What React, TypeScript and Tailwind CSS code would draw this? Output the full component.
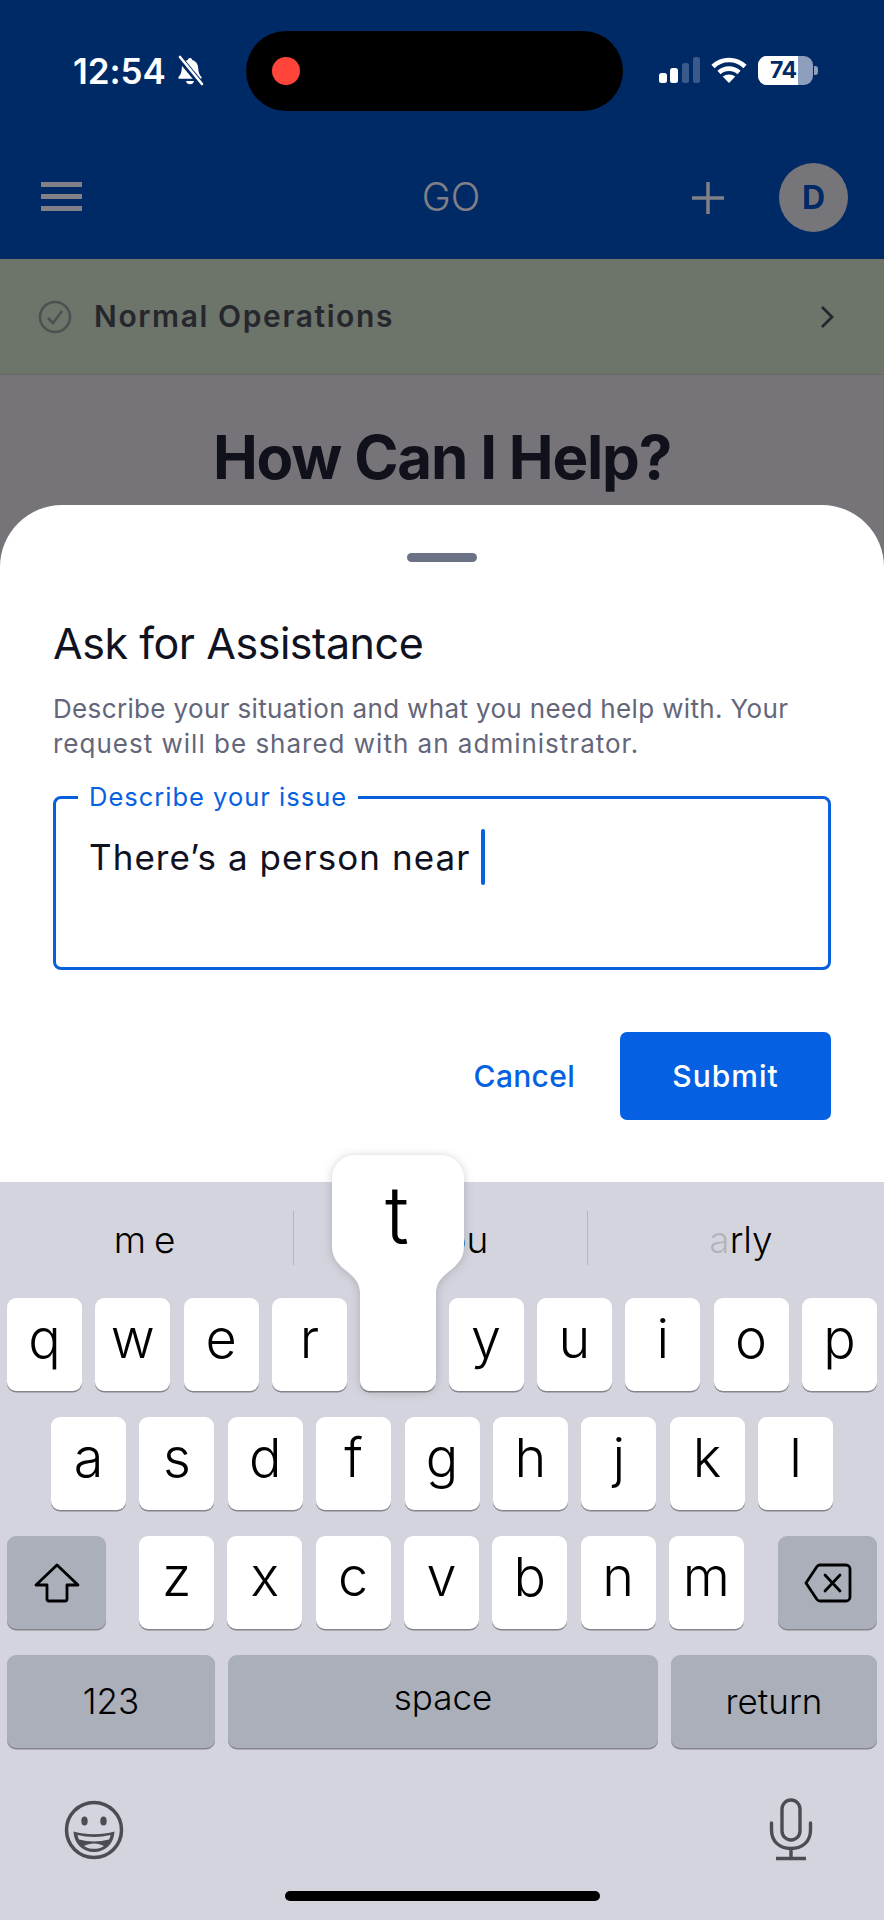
import React from "react";

const KEY_FONT = "font-['Inter',sans-serif] font-light";

function Key({ label, className = "" }: { label?: string; className?: string }) {
  return (
    <div className={`w-[75px] h-[93px] rounded-[9px] bg-white shadow-[0_1.5px_0_#85868c] flex items-center justify-center pb-[12px] text-[54px] leading-none text-black ${className}`}>
      {label}
    </div>
  );
}

function GrayKey({ children, className = "" }: { children: React.ReactNode; className?: string }) {
  return (
    <div className={`h-[93px] rounded-[9px] bg-[#abafba] shadow-[0_1.5px_0_#85868c] flex items-center justify-center text-black ${className}`}>
      {children}
    </div>
  );
}

function BellOff() {
  return (
    <svg width="30" height="32" viewBox="0 0 30 30" fill="none">
      <path d="M15 2c1.3 0 2 .9 2.2 1.9 3.9 1 5.8 4.2 6 8.2.2 4 1 6.700 3.300 9 .5.600.2 1.600-.8 1.600H4.300c-1 0-1.300-1-.8-1.600 2.300-2.300 3.100-5 3.300-9 .2-4 2.100-7.200 6-8.200C13 2.900 13.700 2 15 2z" fill="#fff" />
      <path d="M11 25h8c-.3 2-1.900 3.300-4 3.300S11.300 27 11 25z" fill="#fff" />
      <path d="M4 1.500 L26 28" stroke="#002a66" strokeWidth="6" />
      <path d="M5 1 L27 28" stroke="#fff" strokeWidth="2.600" strokeLinecap="round" />
    </svg>
  );
}

function Signal() {
  return (
    <svg width="41" height="26" viewBox="0 0 41 26">
      <rect x="0" y="16" width="8" height="10" rx="2.500" fill="#fff" />
      <rect x="11" y="11" width="8" height="15" rx="2.500" fill="#fff" />
      <rect x="23" y="6" width="7" height="20" rx="2.500" fill="#3a5a8c" />
      <rect x="34" y="0" width="7" height="26" rx="2.500" fill="#3a5a8c" />
    </svg>
  );
}

function Wifi() {
  return (
    <svg width="36" height="26" viewBox="0 0 36 26" fill="none" stroke="#fff" strokeWidth="4.600">
      <path d="M2 9.500C11 .800 25 .800 34 9.500" />
      <path d="M8 15.500c5.700-5.200 14.300-5.200 20 0" />
      <path d="M18 26l-6.300-6.600c3.600-2.700 9-2.700 12.600 0L18 26z" fill="#fff" stroke="none" />
    </svg>
  );
}

function Battery() {
  return (
    <div className="flex items-center">
      <div className="relative w-[55px] h-[29px] rounded-[9px] overflow-hidden bg-[#8d9fbd] flex">
        <div className="w-[40px] h-full bg-white" />
        <span className="absolute left-[12px] top-0 h-full flex items-center font-['Inter',sans-serif] text-[23px] font-bold text-[#002a66] tracking-[-0.5px]">74</span>
      </div>
      <div className="w-[4px] h-[9px] rounded-r-[3px] bg-[#8d9fbd] ml-[1px]" />
    </div>
  );
}

function ShiftIcon() {
  return (
    <svg width="46" height="40" viewBox="0 0 46 40" fill="none" stroke="#000" strokeWidth="2.800" strokeLinejoin="round">
      <path d="M23 2 L44 22 H33 V36 a2 2 0 0 1-2 2 H15 a2 2 0 0 1-2-2 V22 H2 Z" />
    </svg>
  );
}

function DeleteIcon() {
  return (
    <svg width="48" height="40" viewBox="0 0 48 40" fill="none" stroke="#000" strokeWidth="2.800" strokeLinejoin="round" strokeLinecap="round">
      <path d="M16 2 H42 a4 4 0 0 1 4 4 V34 a4 4 0 0 1-4 4 H16 a4 4 0 0 1-3-1.500 L2 20 L13 3.500 a4 4 0 0 1 3-1.500 Z" />
      <path d="M21 12 L36 28 M36 12 L21 28" />
    </svg>
  );
}

function EmojiIcon() {
  return (
    <svg width="60" height="60" viewBox="0 0 60 60" fill="none">
      <circle cx="30" cy="30" r="27.500" stroke="#4c4d52" strokeWidth="3.500" />
      <ellipse cx="20.500" cy="21" rx="3.200" ry="4.500" fill="#4c4d52" />
      <ellipse cx="39.500" cy="21" rx="3.200" ry="4.500" fill="#4c4d52" />
      <path d="M9.500 31.500C22 35 38 35 50.500 31.500 50 44 41 52 30 52S10 44 9.500 31.500z" fill="#4c4d52" />
      <path d="M13.500 35C24 37.500 36 37.500 46.500 35c-.3 2-1 3.500-1.500 4.500C35 42 25 42 15 39.500c-.6-1.200-1.200-2.700-1.500-4.500z" fill="#d3d4dd" />
      <path d="M20 46c6-3.500 14-3.500 20 0-5.500 3.800-14.500 3.800-20 0z" fill="#d3d4dd" />
    </svg>
  );
}

function MicIcon() {
  return (
    <svg width="44" height="63" viewBox="0 0 44 63" fill="none" stroke="#4c4d52" strokeWidth="3.400">
      <rect x="13" y="2" width="18" height="40" rx="9" />
      <path d="M2.500 25 V32 C2.500 43 10 50.500 22 50.500 S41.500 43 41.500 32 V25" strokeLinecap="round" />
      <path d="M22 50.500 V60.500 M7 60.500 H37" />
    </svg>
  );
}

function KeyPopup() {
  return (
    <div className="absolute left-[331px] top-[1154px] z-10 w-[134px] h-[238px] drop-shadow-[0_1px_5px_rgba(60,62,75,0.25)]">
      <svg width="134" height="238" viewBox="0 0 134 238" className="absolute inset-0">
        <path
          d="M24 1 H110 a23 23 0 0 1 23 23 V92 c0 10-4 16-12 23 -10 8-15 12-16 23 V225 a12 12 0 0 1-12 12 H41 a12 12 0 0 1-12-12 V138 c-1-11-6-15-16-23 C5 108 1 102 1 92 V24 A23 23 0 0 1 24 1 Z"
          fill="#fff"
        />
      </svg>
      <div className={`relative pt-[13px] pr-[2px] text-center text-[80px] leading-[96px] text-black ${KEY_FONT}`}>t</div>
    </div>
  );
}

export default function App() {
  return (
    <div className="relative w-[884px] h-[1920px] overflow-hidden bg-[#d3d4dd] font-['Inter',sans-serif]">
      {/* Header */}
      <div className="h-[259px] bg-[#002a66] flex flex-col">
        <div className="h-[143px] pt-[31px] pl-[73px] pr-[67px] flex items-start">
          <div className="h-[80px] w-[173px] flex items-center gap-[9px] shrink-0">
            <span className="text-[35px] font-semibold text-white tracking-[-0.1px] leading-none">12:54</span>
            <BellOff />
          </div>
          <div className="h-[80px] w-[377px] bg-black rounded-[40px] flex items-center pl-[26px] shrink-0">
            <div className="w-[28px] h-[28px] rounded-full bg-[#ff453a]" />
          </div>
          <div className="h-[80px] flex-1 flex items-center pl-[36px] pb-[2px] gap-[11px]">
            <Signal />
            <Wifi />
            <Battery />
          </div>
        </div>
        <div className="flex-1 flex items-start pl-[41px] pr-[36px] pt-[20px]">
          <div className="w-[41px] h-[69px] flex flex-col justify-center gap-[7px] shrink-0 pb-[2px]">
            <div className="h-[5px] bg-[#808086]" />
            <div className="h-[5px] bg-[#808086]" />
            <div className="h-[5px] bg-[#808086]" />
          </div>
          <div className="flex-1 h-[69px] flex items-center justify-center text-[39px] font-light text-[#808086] pl-[128px]">GO</div>
          <div className="h-[69px] flex items-center mr-[55px] shrink-0">
            <svg width="32" height="32" viewBox="0 0 32 32" stroke="#808086" strokeWidth="3.500"><path d="M16 0 V32 M0 16 H32" /></svg>
          </div>
          <div className="w-[69px] h-[69px] rounded-full bg-[#76767a] flex items-center justify-center text-[32px] font-bold text-[#002a66] shrink-0">D</div>
        </div>
      </div>

      {/* Status band */}
      <div className="h-[116px] bg-[#6d7469] border-b border-[#66686a] flex items-center pl-[38px] pr-[50px]">
        <svg width="34" height="34" viewBox="0 0 34 34" fill="none" stroke="#4e5052" strokeWidth="2.600" className="shrink-0">
          <circle cx="17" cy="17" r="15" />
          <path d="M10 18 L15 23 L24 11" />
        </svg>
        <span className="ml-[22px] flex-1 text-[30px] font-semibold text-[#26272e] tracking-[1.6px]">Normal Operations</span>
        <svg width="14" height="22" viewBox="0 0 14 22" fill="none" stroke="#26272e" strokeWidth="2.800"><path d="M2 1 L12 11 L2 21" /></svg>
      </div>

      {/* Dimmed page + sheet */}
      <div className="bg-[#767478]">
        <div className="h-[130px] pt-[47px] text-center text-[60px] leading-[70px] font-bold text-[#10111a] tracking-[-1.200px]">How Can I Help?</div>
        <div className="h-[677px] bg-white rounded-t-[62px] pt-[48px] px-[53px]">
          <div className="w-[70px] h-[9px] mx-auto rounded-full bg-[#6b7285]" />
          <div className="mt-[56px] text-[43px] leading-[50px] text-[#10121f] tracking-[-0.45px]">Ask for Assistance</div>
          <div className="mt-[23px] text-[26px] leading-[35px] text-[#63667a]">
            <span className="block tracking-[0.35px] whitespace-nowrap">Describe your situation and what you need help with. Your</span>
            <span className="block tracking-[1px] whitespace-nowrap">request will be shared with an administrator.</span>
          </div>
          <div className="relative mt-[35px] h-[174px] border-[3.500px] border-[#0a5fdc] rounded-[8px] px-[33px] pt-[32px]">
            <div className="absolute left-[22px] -top-[16px] bg-white px-[11px] text-[25.500px] leading-[28px] text-[#0561e2] tracking-[1px]">Describe your issue</div>
            <div className="flex items-start">
              <span className="text-[35px] leading-[52px] text-[#10121f] tracking-[1.05px] whitespace-pre">There’s a person near</span>
              <span className="ml-[11px] -mt-[2px] w-[4px] h-[56px] rounded-full bg-[#0a5fdc]" />
            </div>
          </div>
          <div className="mt-[62px] flex justify-end items-center">
            <span className="text-[30px] font-medium text-[#0561e2] tracking-[0.3px] mr-[45px]">Cancel</span>
            <div className="w-[211px] h-[88px] rounded-[7px] bg-[#0561e2] flex items-center justify-center text-[30px] font-medium text-white tracking-[1px]">Submit</div>
          </div>
        </div>
      </div>

      {/* Keyboard */}
      <div className={`h-[738px] bg-[#d3d4dd] ${KEY_FONT}`}>
        <div className="h-[116px] flex pt-[29px]">
          <div className="w-[294px] h-[54px] border-r border-[#b4b6bf] flex items-center justify-center gap-[8px] pt-[3px] pr-[4px] text-[37px] text-black">
            <span>m</span>
            <span>e</span>
          </div>
          <div className="w-[294px] h-[54px] border-r border-[#b4b6bf] flex items-center justify-center pt-[3px] pl-[32px] text-[37px] text-black">you</div>
          <div className="flex-1 h-[54px] flex items-center justify-center pt-[3px] pl-[10px] text-[37px] text-black">
            <span className="opacity-15">a</span>rly
          </div>
        </div>
        <div className="px-[7px] flex justify-between">
          {["q", "w", "e", "r", "t", "y", "u", "i", "o", "p"].map((k) => (
            <Key key={k} label={k === "t" ? "" : k} />
          ))}
        </div>
        <div className="mt-[26px] pl-[51px] pr-[51px] flex justify-between">
          {["a", "s", "d", "f", "g", "h", "j", "k", "l"].map((k) => (
            <Key key={k} label={k} />
          ))}
        </div>
        <div className="mt-[26px] px-[7px] flex justify-between">
          <GrayKey className="w-[99px]"><ShiftIcon /></GrayKey>
          <div className="flex gap-[13.300px] mr-[1px]">
            {["z", "x", "c", "v", "b", "n", "m"].map((k) => (
              <Key key={k} label={k} />
            ))}
          </div>
          <GrayKey className="w-[99px]"><DeleteIcon /></GrayKey>
        </div>
        <div className="mt-[26px] px-[7px] flex gap-[13px]">
          <GrayKey className="w-[208px] text-[35px]">123</GrayKey>
          <GrayKey className="flex-1 text-[35px] pb-[8px]">space</GrayKey>
          <GrayKey className="w-[206px] text-[35px]">return</GrayKey>
        </div>
        <div className="mt-[50px] flex justify-between items-center pl-[64px] pr-[71px]">
          <EmojiIcon />
          <MicIcon />
        </div>
        <div className="mt-[30px] mx-auto w-[315px] h-[10px] rounded-full bg-black" />
      </div>

      <KeyPopup />
    </div>
  );
}
